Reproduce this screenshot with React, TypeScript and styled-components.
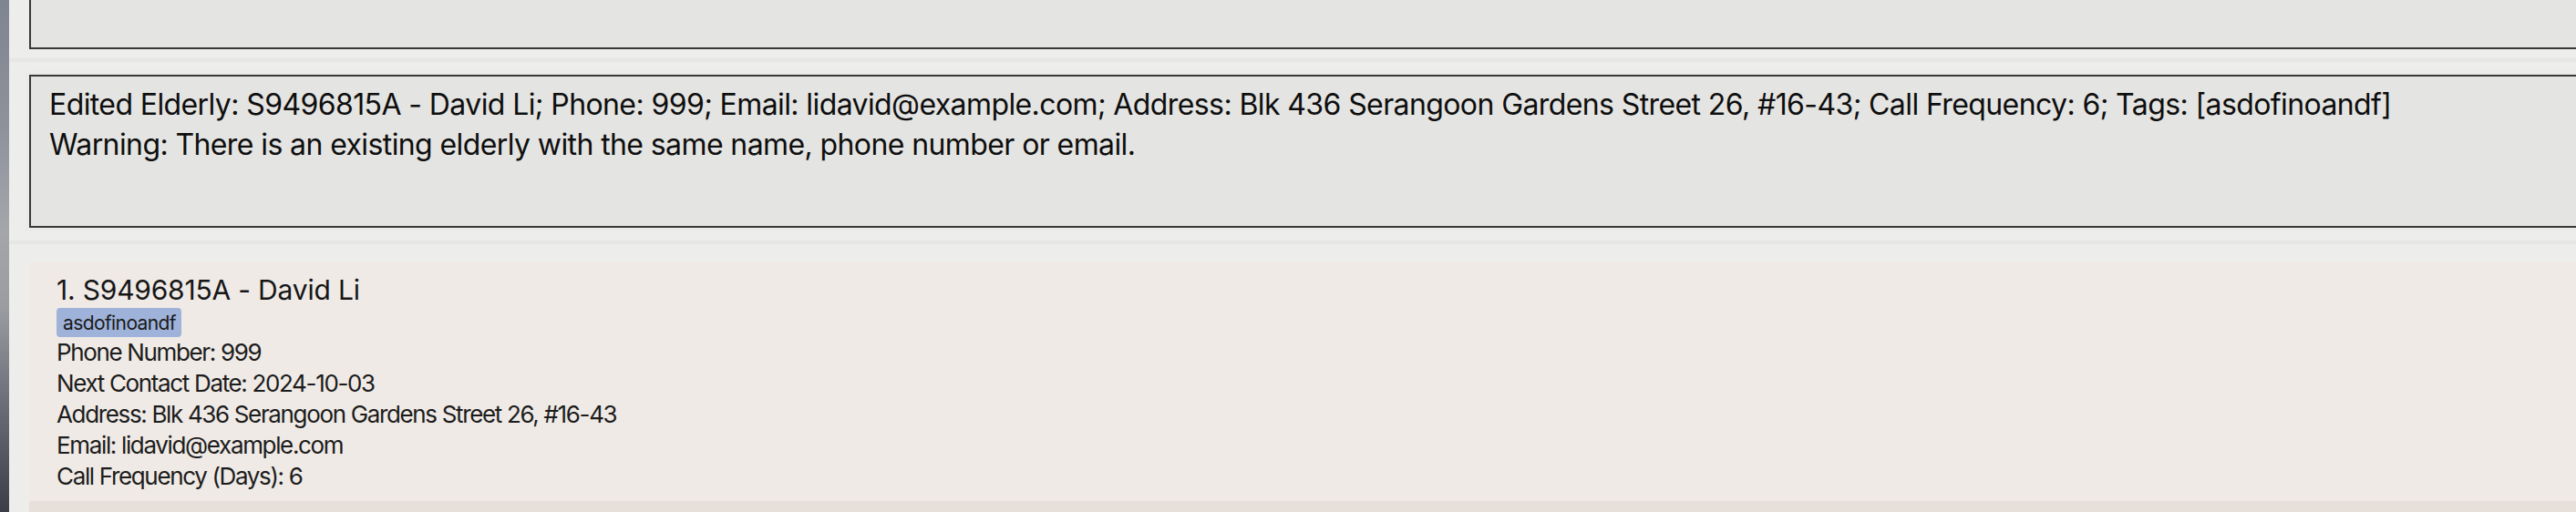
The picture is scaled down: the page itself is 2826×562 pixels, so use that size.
import React from "react";
import styled, { createGlobalStyle } from "styled-components";

const Global = createGlobalStyle`
  html, body { margin: 0; padding: 0; }
  body {
    width: 2826px;
    height: 562px;
    overflow: hidden;
    font-family: Inter, "Noto Sans", sans-serif;
    -webkit-font-smoothing: antialiased;
  }
`;

const Window = styled.div`
  display: flex;
  width: 2826px;
  height: 562px;
  overflow: hidden;
`;

const Wallpaper = styled.div`
  flex: 0 0 10px;
  background: linear-gradient(
    180deg,
    #7f8591 0%,
    #8e929c 25%,
    #a4a6ab 45%,
    #9a9ca2 60%,
    #6d7079 78%,
    #3b3e46 100%
  );
`;

const Main = styled.div`
  flex: 1;
  min-width: 0;
  display: flex;
  flex-direction: column;
  background: #ededeb;
  overflow: hidden;

  & > * {
    flex-shrink: 0;
  }
`;

const CommandArea = styled.div`
  padding-left: 22px;
`;

const CommandBox = styled.div`
  height: 54px;
  box-sizing: border-box;
  background: #e4e4e2;
  border-left: 2px solid #383838;
  border-bottom: 2px solid #383838;
`;

const Divider = styled.div<{ $above: number; $below: number }>`
  height: 4px;
  margin: ${(p) => p.$above}px 0 ${(p) => p.$below}px;
  background: #e6e6e4;
`;

const ResultPane = styled.div`
  padding-left: 18px;
`;

const ResultWrap = styled.div`
  padding: 4px 0 4px 4px;
  background: #ebebe9;
`;

const ResultBox = styled.div`
  box-sizing: border-box;
  height: 168px;
  background: #e4e4e2;
  border: 2px solid #383838;
  border-right: none;
  padding: 9px 0 0 20px;
  font-size: 32px;
  line-height: 44px;
  letter-spacing: -0.6px;
  color: #0e0e0e;
  white-space: nowrap;
`;

const ListPane = styled.div`
  padding-left: 22px;
  display: flex;
  flex-direction: column;
`;

const Card = styled.div`
  background: #efeae6;
  padding: 12px 0 10px 30px;
  display: flex;
  flex-direction: column;
  align-items: flex-start;
  color: #1c1c1c;
`;

const NextCard = styled.div`
  height: 40px;
  background: #e6dfda;
`;

const Title = styled.div`
  font-size: 30px;
  line-height: 36px;
  letter-spacing: -0.2px;
  color: #161616;
`;

const Tag = styled.span`
  margin-top: 2px;
  height: 32px;
  box-sizing: border-box;
  padding: 0 6px 0 7px;
  display: inline-flex;
  align-items: center;
  background: #9fb3da;
  border-radius: 4px;
  font-size: 21px;
  letter-spacing: -0.6px;
  color: #1a1a1a;
`;

const Detail = styled.div`
  font-size: 26px;
  line-height: 34px;
  letter-spacing: -1.35px;
  white-space: nowrap;
`;

export default function App() {
  return (
    <>
      <Global />
      <Window>
        <Wallpaper />
        <Main>
          <CommandArea>
            <CommandBox />
          </CommandArea>
          <Divider $above={10} $below={10} />
          <ResultPane>
            <ResultWrap>
              <ResultBox>
                <div>
                  Edited Elderly: S9496815A - David Li; Phone: 999; Email: lidavid@example.com; Address: Blk 436
                  Serangoon Gardens Street 26, #16-43; Call Frequency: 6; Tags: [asdofinoandf]
                </div>
                <div>Warning: There is an existing elderly with the same name, phone number or email.</div>
              </ResultBox>
            </ResultWrap>
          </ResultPane>
          <Divider $above={10} $below={20} />
          <ListPane>
            <Card>
              <Title>1. S9496815A - David Li</Title>
              <Tag>asdofinoandf</Tag>
              <Detail>Phone Number: 999</Detail>
              <Detail>Next Contact Date: 2024-10-03</Detail>
              <Detail>Address: Blk 436 Serangoon Gardens Street 26, #16-43</Detail>
              <Detail>Email: lidavid@example.com</Detail>
              <Detail>Call Frequency (Days): 6</Detail>
            </Card>
            <NextCard />
          </ListPane>
        </Main>
      </Window>
    </>
  );
}
